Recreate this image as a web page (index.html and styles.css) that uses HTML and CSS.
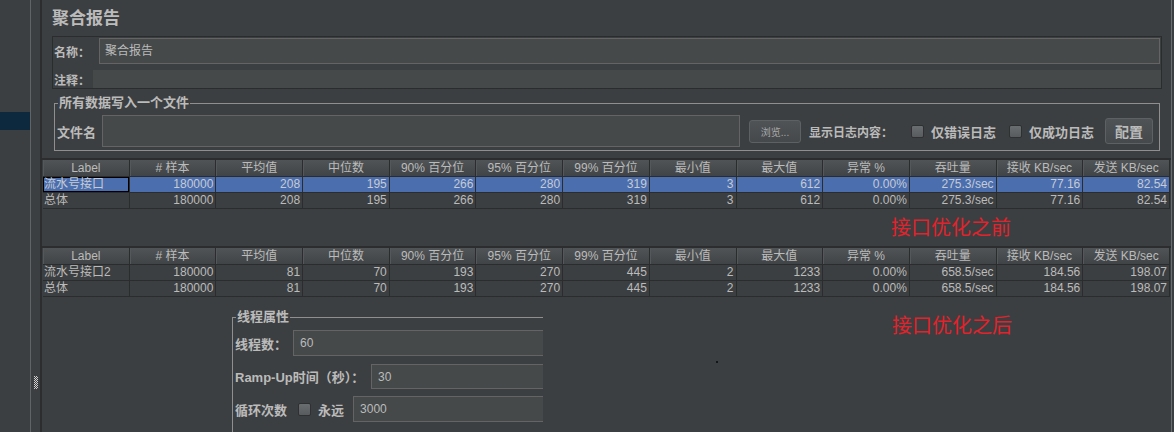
FILE: index.html
```html
<!DOCTYPE html>
<html lang="zh">
<head>
<meta charset="utf-8">
<title>聚合报告</title>
<link rel="stylesheet" href="styles.css">
</head>
<body>
<div class="sidebar"><div class="tree-sel"></div></div>
<div class="splitter">
  <svg class="grip" width="6" height="14" viewBox="0 0 6 14">
    <g fill="#d0d0d0">
      <rect x="1" y="0" width="1" height="1"/><rect x="3" y="0" width="1" height="1"/>
      <rect x="2" y="1" width="1" height="1"/><rect x="4" y="1" width="1" height="1"/>
      <rect x="1" y="2" width="1" height="1"/><rect x="3" y="2" width="1" height="1"/>
      <rect x="2" y="3" width="1" height="1"/><rect x="4" y="3" width="1" height="1"/>
      <rect x="1" y="4" width="1" height="1"/><rect x="3" y="4" width="1" height="1"/>
      <rect x="2" y="5" width="1" height="1"/><rect x="4" y="5" width="1" height="1"/>
      <rect x="1" y="6" width="1" height="1"/><rect x="3" y="6" width="1" height="1"/>
      <rect x="2" y="7" width="1" height="1"/><rect x="4" y="7" width="1" height="1"/>
      <rect x="1" y="8" width="1" height="1"/><rect x="3" y="8" width="1" height="1"/>
      <rect x="2" y="9" width="1" height="1"/><rect x="4" y="9" width="1" height="1"/>
      <rect x="1" y="10" width="1" height="1"/><rect x="3" y="10" width="1" height="1"/>
      <rect x="2" y="11" width="1" height="1"/><rect x="4" y="11" width="1" height="1"/>
      <rect x="1" y="12" width="1" height="1"/><rect x="3" y="12" width="1" height="1"/>
    </g>
  </svg>
</div>
<div class="main">
  <div class="title">聚合报告</div>
  <div class="name-panel">
    <div class="np-row"><span class="lbl lbl-name">名称：</span><div class="field field-name">聚合报告</div></div>
    <div class="np-row np-row2"><span class="lbl lbl-comment">注释：</span><div class="field field-comment"></div></div>
  </div>
  <fieldset class="file-set">
    <legend>所有数据写入一个文件</legend>
    <div class="file-row">
      <span class="lbl lbl-file">文件名</span>
      <div class="field field-file"></div>
      <button class="btn btn-browse">浏览...</button>
      <span class="lbl lbl-log">显示日志内容：</span>
      <span class="cb cb-first"></span><span class="lbl cb-text">仅错误日志</span>
      <span class="cb cb-second"></span><span class="lbl cb-text">仅成功日志</span>
      <button class="btn btn-config">配置</button>
    </div>
  </fieldset>
  <div class="pane pane1">
    <table class="grid">
      <thead>
        <tr><th>Label</th><th># 样本</th><th>平均值</th><th>中位数</th><th>90% 百分位</th><th>95% 百分位</th><th>99% 百分位</th><th>最小值</th><th>最大值</th><th>异常 %</th><th>吞吐量</th><th>接收 KB/sec</th><th>发送 KB/sec</th></tr>
      </thead>
      <tbody>
        <tr class="sel"><td class="label focus">流水号接口</td><td>180000</td><td>208</td><td>195</td><td>266</td><td>280</td><td>319</td><td>3</td><td>612</td><td>0.00%</td><td>275.3/sec</td><td>77.16</td><td>82.54</td></tr>
        <tr><td class="label">总体</td><td>180000</td><td>208</td><td>195</td><td>266</td><td>280</td><td>319</td><td>3</td><td>612</td><td>0.00%</td><td>275.3/sec</td><td>77.16</td><td>82.54</td></tr>
      </tbody>
    </table>
  </div>
  <div class="pane pane2">
    <table class="grid">
      <thead>
        <tr><th>Label</th><th># 样本</th><th>平均值</th><th>中位数</th><th>90% 百分位</th><th>95% 百分位</th><th>99% 百分位</th><th>最小值</th><th>最大值</th><th>异常 %</th><th>吞吐量</th><th>接收 KB/sec</th><th>发送 KB/sec</th></tr>
      </thead>
      <tbody>
        <tr><td class="label">流水号接口2</td><td>180000</td><td>81</td><td>70</td><td>193</td><td>270</td><td>445</td><td>2</td><td>1233</td><td>0.00%</td><td>658.5/sec</td><td>184.56</td><td>198.07</td></tr>
        <tr><td class="label">总体</td><td>180000</td><td>81</td><td>70</td><td>193</td><td>270</td><td>445</td><td>2</td><td>1233</td><td>0.00%</td><td>658.5/sec</td><td>184.56</td><td>198.07</td></tr>
      </tbody>
    </table>
  </div>
</div>

<div class="note note-before">接口优化之前</div>
<div class="note note-after">接口优化之后</div>

<fieldset class="thread-set">
  <legend>线程属性</legend>
  <div class="tr-row tr-row1"><span class="lbl tr-lbl1">线程数：</span><div class="field tr-field">60</div></div>
  <div class="tr-row tr-row2"><span class="lbl tr-lbl2">Ramp-Up时间（秒）：</span><div class="field tr-field">30</div></div>
  <div class="tr-row tr-row3"><span class="lbl tr-lbl3">循环次数</span><span class="cb cb-loop"></span><span class="lbl tr-forever">永远</span><div class="field tr-field tr-loop">3000</div></div>
</fieldset>
<span class="dot"></span>
</body>
</html>
```

FILE: styles.css
```css
* { box-sizing: border-box; }

body {
  margin: 0;
  width: 1174px;
  height: 432px;
  overflow: hidden;
  position: relative;
  display: flex;
  background: #3c3f41;
  color: #bbbbbb;
  font-family: "Liberation Sans", "Noto Sans CJK SC", sans-serif;
  font-size: 12px;
}

.sidebar {
  width: 31px;
  border-right: 1px solid #616466;
}
.tree-sel {
  margin-top: 112px;
  height: 18px;
  background: #0d293e;
}

.splitter {
  width: 11px;
  border-right: 2px solid #2b2d2f;
  display: flex;
  align-items: flex-end;
  justify-content: center;
  padding-bottom: 42px;
}
.grip { display: block; }

.main {
  width: 1130px;
  border-right: 1px solid #6a6d6f;
  display: flex;
  flex-direction: column;
}

.title {
  padding: 8px 0 0 10px;
  height: 30px;
  line-height: 22px;
  font-size: 17px;
  font-weight: bold;
  color: #bbbbbb;
}

.lbl {
  font-weight: bold;
  color: #bbbbbb;
  white-space: nowrap;
}

.field {
  background: #45494a;
  color: #bbbbbb;
  font-size: 12px;
}

.name-panel {
  margin: 6px 0 0 10px;
  width: 1110px;
  border: 1px solid #2a2c2e;
  padding: 1px 0 0 1px;
}
.np-row {
  display: flex;
  align-items: center;
  height: 26px;
}
.np-row2 {
  margin-top: 6px;
  height: 18px;
}
.lbl-name { width: 45px; font-size: 12px; }
.lbl-comment { width: 39px; font-size: 12px; }
.field-name {
  flex: 1;
  height: 26px;
  margin-right: 1px;
  border: 1px solid #646464;
  padding-left: 5px;
  line-height: 24px;
}
.field-comment {
  flex: 1;
  height: 18px;
}

.file-set {
  margin: 6px 0 0 12px;
  width: 1106px;
  min-width: 0;
  border: 1px solid #8f8f8f;
  padding: 4px 2px 3px 2px;
}
.file-set legend,
.thread-set legend {
  font-size: 13px;
  font-weight: bold;
  line-height: 16px;
  padding: 0 1px;
  margin-left: 1px;
  color: #bbbbbb;
}
.file-row {
  display: flex;
  align-items: center;
  height: 32px;
}
.lbl-file { width: 45px; font-size: 13px; }
.field-file {
  width: 638px;
  height: 32px;
  border: 1px solid #646464;
}
.btn {
  font-family: "Liberation Sans", "Noto Sans CJK SC", sans-serif;
  color: #bbbbbb;
  background: linear-gradient(#4f5355, #45494b);
  border: 1px solid #5e6163;
  border-radius: 3px;
  padding: 0;
}
.btn-browse {
  margin-left: 9px;
  width: 52px;
  height: 23px;
  font-size: 10px;
  color: #a8a8a8;
}
.lbl-log { margin-left: 8px; font-size: 12px; }
.cb {
  width: 13px;
  height: 13px;
  border: 1px solid #2e3032;
  border-radius: 2px;
  background: linear-gradient(#6a6d6f, #595c5e);
  flex: none;
}
.cb-first { margin-left: 18px; }
.cb-second { margin-left: 13px; }
.cb-text { margin-left: 7px; font-size: 13px; }
.btn-config {
  margin-left: 11px;
  width: 48px;
  height: 26px;
  font-size: 14px;
  font-weight: bold;
}

.pane {
  border-top: 2px solid #2b2d2f;
}
.pane1 {
  margin-top: 7px;
  height: 88px;
}
.pane2 {
  flex: 1;
}

.grid {
  margin-left: 1px;
  width: 1127px;
  table-layout: fixed;
  border-collapse: separate;
  border-spacing: 0;
  font-size: 12px;
}
.grid th {
  font-weight: normal;
  height: 17px;
  line-height: 16px;
  padding: 0;
  text-align: center;
  color: #bbbbbb;
  background: linear-gradient(#505456, #414446);
  border-right: 1px solid #2a2c2e;
  border-bottom: 1px solid #2a2c2e;
  box-shadow: inset 1px 0 0 #55585a;
  white-space: nowrap;
  overflow: hidden;
}
.grid td {
  height: 16px;
  line-height: 15px;
  padding: 0 2px 0 0;
  text-align: right;
  color: #bbbbbb;
  border-right: 1px solid #2a2c2e;
  border-bottom: 1px solid #2a2c2e;
  white-space: nowrap;
  overflow: hidden;
}
.grid td.label {
  text-align: left;
  padding: 0 0 0 1px;
}
.grid tr.sel td {
  background: #4b6eaf;
  color: #c6cbd3;
}
.grid td.focus {
  box-shadow: inset 0 0 0 1px #000000;
}

.note {
  position: absolute;
  font-family: "Noto Sans CJK SC", sans-serif;
  font-size: 20px;
  line-height: 26px;
  color: #e3222b;
  white-space: nowrap;
}
.note-before { left: 891px; top: 214px; }
.note-after { left: 892px; top: 312px; }

.thread-set {
  position: absolute;
  left: 232px;
  top: 309px;
  width: 311px;
  height: 140px;
  min-width: 0;
  margin: 0;
  border: 1px solid #8f8f8f;
  border-right: none;
  border-bottom: none;
  padding: 5px 0 0 2px;
}
.tr-row {
  display: flex;
  align-items: center;
  height: 26px;
}
.tr-row2 { margin-top: 8px; height: 25px; }
.tr-row3 { margin-top: 7px; }
.tr-lbl1 { width: 58px; font-size: 13px; }
.tr-lbl2 { width: 136px; font-size: 13px; }
.tr-lbl3 { font-size: 13px; }
.cb-loop { margin-left: 11px; }
.tr-forever { margin-left: 7px; font-size: 13px; }
.tr-field {
  flex: 1;
  height: 100%;
  border: 1px solid #646464;
  border-right: none;
  padding-left: 6px;
  line-height: 24px;
}
.tr-loop { margin-left: 9px; }

.dot {
  position: absolute;
  left: 716px;
  top: 361px;
  width: 2px;
  height: 2px;
  background: #151515;
}
```
